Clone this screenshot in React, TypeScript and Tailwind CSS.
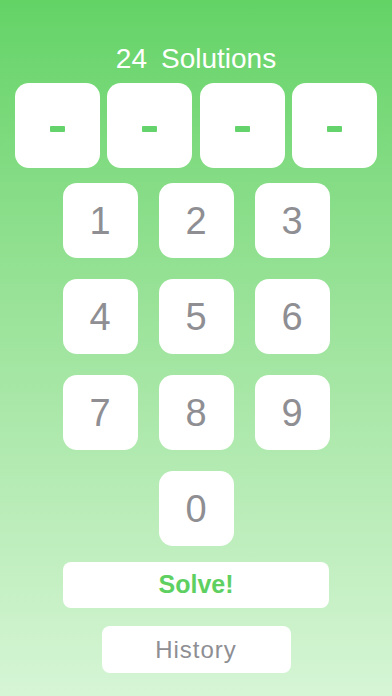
import React from "react";

const digitRows = [
  ["1", "2", "3"],
  ["4", "5", "6"],
  ["7", "8", "9"],
];

function Key({ d }: { d: string }) {
  return (
    <button className="flex h-[75px] w-[75px] items-center justify-center rounded-[14px] bg-white text-[38px] leading-none text-[#8e8e93]">
      {d}
    </button>
  );
}

export default function App() {
  return (
    <div
      className="flex h-[696px] w-full flex-col items-center overflow-hidden bg-linear-to-b from-[#63d366] to-[#d6f5d5] pt-[45px]"
      style={{ fontFamily: '"Liberation Sans", Arial, sans-serif' }}
    >
      <div className="flex h-[28px] items-center text-[28px] leading-[28px] text-white">
        <span>24</span>
        <span className="ml-[14px]">Solutions</span>
      </div>

      <div className="mt-[10px] flex gap-[7.5px]">
        {[0, 1, 2, 3].map((i) => (
          <div
            key={i}
            className="flex h-[85px] w-[85px] items-center justify-center rounded-[14px] bg-white pt-[7px]"
          >
            <div className="h-[6px] w-[15px] rounded-[1px] bg-[#64d36b]" />
          </div>
        ))}
      </div>

      <div className="mt-[15px] flex flex-col items-center gap-[21px]">
        {digitRows.map((row, i) => (
          <div key={i} className="flex gap-[21px]">
            {row.map((d) => (
              <Key key={d} d={d} />
            ))}
          </div>
        ))}
        <Key d="0" />
      </div>

      <button className="mt-[16px] flex h-[46px] w-[266px] items-center justify-center rounded-[8px] bg-white text-[25px] font-bold text-[#5ed062]">
        Solve!
      </button>

      <button className="mt-[18px] flex h-[47px] w-[189px] items-center justify-center rounded-[8px] bg-white text-[24px] tracking-[1px] text-[#8e8e93]">
        History
      </button>
    </div>
  );
}
